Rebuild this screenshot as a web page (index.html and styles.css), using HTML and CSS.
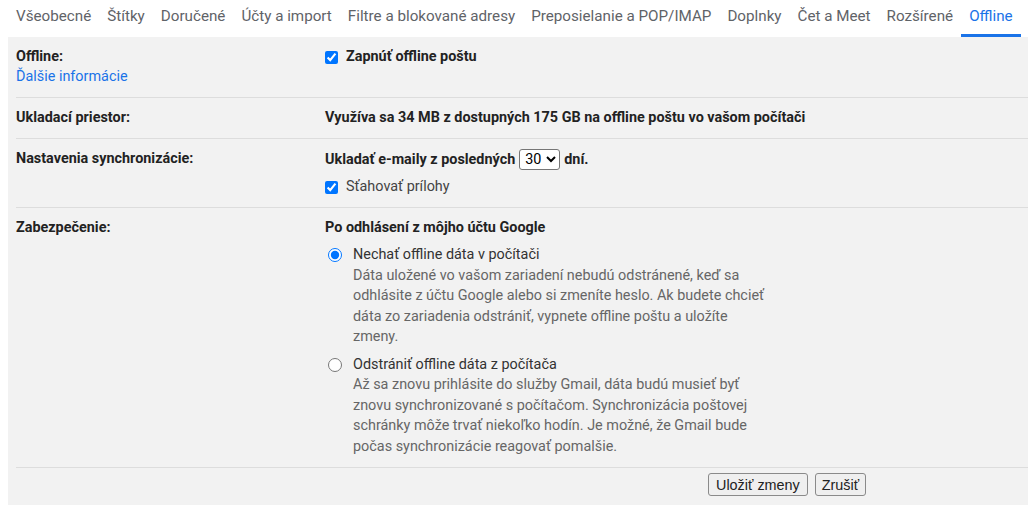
FILE: index.html
```html
<!DOCTYPE html>
<html>
<head>
  <title>Nastavenia - Offline</title>
  <meta charset="utf-8">
  <link rel="stylesheet" href="styles.css">
</head>
<body>
  <div class="tabs">
    <a class="tab">Všeobecné</a>
    <a class="tab">Štítky</a>
    <a class="tab">Doručené</a>
    <a class="tab">Účty a import</a>
    <a class="tab">Filtre a blokované adresy</a>
    <a class="tab">Preposielanie a POP/IMAP</a>
    <a class="tab">Doplnky</a>
    <a class="tab">Čet a Meet</a>
    <a class="tab">Rozšírené</a>
    <a class="tab active">Offline</a>
  </div>

  <div class="settings">
    <div class="row">
      <div class="label">
        Offline:
        <a class="link">Ďalšie informácie</a>
      </div>
      <div class="value">
        <label class="check strong"><input type="checkbox" checked> Zapnúť offline poštu</label>
      </div>
    </div>

    <div class="row">
      <div class="label">Ukladací priestor:</div>
      <div class="value strong">Využíva sa 34 MB z dostupných 175 GB na offline poštu vo vašom počítači</div>
    </div>

    <div class="row">
      <div class="label">Nastavenia synchronizácie:</div>
      <div class="value">
        <div class="strong sync-line">
          Ukladať e-maily z posledných
          <select class="days">
            <option>7</option>
            <option selected>30</option>
            <option>90</option>
          </select>
          dní.
        </div>
        <label class="check sub"><input type="checkbox" checked> Sťahovať prílohy</label>
      </div>
    </div>

    <div class="row">
      <div class="label">Zabezpečenie:</div>
      <div class="value">
        <div class="strong">Po odhlásení z môjho účtu Google</div>
        <label class="option">
          <input type="radio" name="logout" checked>
          <span class="option-text">
            <span class="option-title">Nechať offline dáta v počítači</span>
            <span class="option-desc">Dáta uložené vo vašom zariadení nebudú odstránené, keď sa odhlásite z účtu Google alebo si zmeníte heslo. Ak budete chcieť dáta zo zariadenia odstrániť, vypnete offline poštu a uložíte zmeny.</span>
          </span>
        </label>
        <label class="option">
          <input type="radio" name="logout">
          <span class="option-text">
            <span class="option-title">Odstrániť offline dáta z počítača</span>
            <span class="option-desc">Až sa znovu prihlásite do služby Gmail, dáta budú musieť byť znovu synchronizované s počítačom. Synchronizácia poštovej schránky môže trvať niekoľko hodín. Je možné, že Gmail bude počas synchronizácie reagovať pomalšie.</span>
          </span>
        </label>
      </div>
    </div>

    <div class="actions">
      <button class="btn">Uložiť zmeny</button>
      <button class="btn">Zrušiť</button>
    </div>
  </div>
</body>
</html>
```

FILE: styles.css
```css
body {
  margin: 0;
  background-color: #fff;
  font-family: Roboto, "Noto Sans", Arial, sans-serif;
  font-size: 14.4px;
  color: #222;
}

/* Tab bar */
.tabs {
  display: flex;
  height: 37px;
  padding-left: 8px;
  background-color: #fff;
}

.tab {
  padding: 7px 8px 0;
  font-size: 15.2px;
  color: #5f6368;
  border-bottom: 3px solid transparent;
  white-space: nowrap;
  cursor: pointer;
}

.tab.active {
  color: #1a73e8;
  border-bottom-color: #1a73e8;
}

/* Settings panel */
.settings {
  margin-left: 8px;
  padding-left: 8px;
  background-color: #f2f2f2;
  min-height: 468px;
}

.row {
  display: flex;
  padding: 10px 0;
  line-height: 20px;
  border-bottom: 1px solid #ddd;
}

.label {
  width: 309px;
  flex-shrink: 0;
  font-weight: bold;
}

.link {
  display: block;
  font-weight: normal;
  color: #1a73e8;
  cursor: pointer;
}

.strong {
  font-weight: bold;
}

.check {
  display: flex;
  align-items: center;
}

.check input {
  width: 13px;
  height: 13px;
  margin: 0 8px 0 0;
}

.check.sub {
  margin-top: 7px;
  color: #444;
}

.sync-line {
  display: flex;
  align-items: center;
  gap: 4px;
  height: 21px;
}

.days {
  height: 21px;
  padding: 0 1px;
  font-family: Roboto, Arial, sans-serif;
  font-size: 14.4px;
  border: 1px solid #767676;
  border-radius: 3px;
  background-color: #fff;
}

.option {
  display: flex;
  align-items: flex-start;
  margin-top: 7px;
}

.option + .option {
  margin-top: 7px;
}

.option input {
  width: 14px;
  height: 14px;
  margin: 3px 11px 0 3px;
  flex-shrink: 0;
}

.option-text {
  width: 418px;
  line-height: 20.5px;
}

.option-title {
  display: block;
  color: #333;
}

.option-desc {
  display: block;
  color: #666;
}

/* Buttons */
.actions {
  display: flex;
  gap: 7px;
  padding: 5px 0 0 692px;
}

.btn {
  height: 23px;
  padding: 0 7px;
  font-family: "Liberation Sans", Arial, sans-serif;
  font-size: 14.4px;
  color: #222;
  background-color: #efefef;
  border: 1px solid #8a8a8a;
  border-radius: 3px;
}

.btn + .btn {
  padding: 0 6px;
}
```
